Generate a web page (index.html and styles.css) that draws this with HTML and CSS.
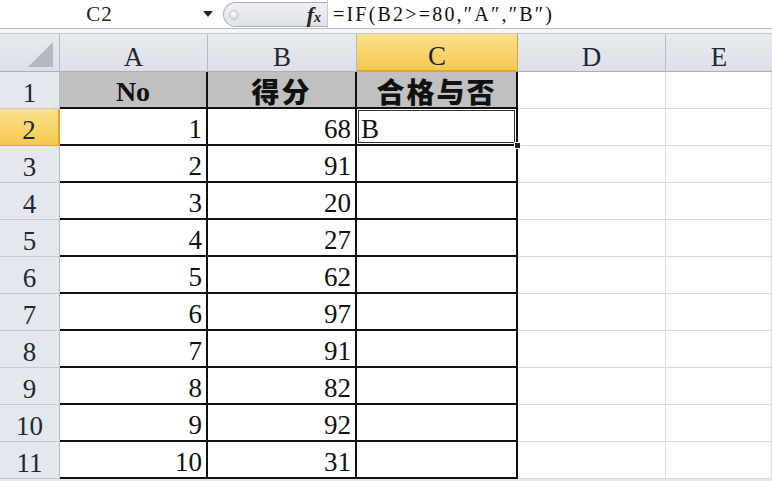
FILE: index.html
```html
<!DOCTYPE html>
<html lang="zh">
<head>
<meta charset="utf-8">
<title>Excel</title>
<link rel="stylesheet" href="styles.css">
</head>
<body>
<div class="fbar">
  <div class="namebox">
    <span class="name">C2</span>
    <span class="arrow"></span>
  </div>
  <div class="fxbox">
    <span class="knob"></span>
    <span class="fx"><i>f</i><span class="x">x</span></span>
  </div>
  <div class="formula">=IF(B2&gt;=80,″A″,″B″)</div>
</div>
<div class="strip"></div>
<div class="sheet">
  <div class="corner"><span class="tri"></span></div>
  <div class="ch">A</div>
  <div class="ch">B</div>
  <div class="ch sel">C</div>
  <div class="ch">D</div>
  <div class="ch last">E</div>

  <div class="rh">1</div>
  <div class="c t hd">No</div>
  <div class="c t hd cjk">得分</div>
  <div class="c t hd cjk">合格与否</div>
  <div class="c"></div>
  <div class="c"></div>

  <div class="rh sel">2</div>
  <div class="c t num">1</div>
  <div class="c t num">68</div>
  <div class="c t txt active">B<span class="handle"></span></div>
  <div class="c"></div>
  <div class="c"></div>

  <div class="rh">3</div>
  <div class="c t num">2</div>
  <div class="c t num">91</div>
  <div class="c t"></div>
  <div class="c"></div>
  <div class="c"></div>

  <div class="rh">4</div>
  <div class="c t num">3</div>
  <div class="c t num">20</div>
  <div class="c t"></div>
  <div class="c"></div>
  <div class="c"></div>

  <div class="rh">5</div>
  <div class="c t num">4</div>
  <div class="c t num">27</div>
  <div class="c t"></div>
  <div class="c"></div>
  <div class="c"></div>

  <div class="rh">6</div>
  <div class="c t num">5</div>
  <div class="c t num">62</div>
  <div class="c t"></div>
  <div class="c"></div>
  <div class="c"></div>

  <div class="rh">7</div>
  <div class="c t num">6</div>
  <div class="c t num">97</div>
  <div class="c t"></div>
  <div class="c"></div>
  <div class="c"></div>

  <div class="rh">8</div>
  <div class="c t num">7</div>
  <div class="c t num">91</div>
  <div class="c t"></div>
  <div class="c"></div>
  <div class="c"></div>

  <div class="rh">9</div>
  <div class="c t num">8</div>
  <div class="c t num">82</div>
  <div class="c t"></div>
  <div class="c"></div>
  <div class="c"></div>

  <div class="rh">10</div>
  <div class="c t num">9</div>
  <div class="c t num">92</div>
  <div class="c t"></div>
  <div class="c"></div>
  <div class="c"></div>

  <div class="rh">11</div>
  <div class="c t num">10</div>
  <div class="c t num">31</div>
  <div class="c t"></div>
  <div class="c"></div>
  <div class="c"></div>
</div>
</body>
</html>
```
FILE: styles.css
```css
* { box-sizing: border-box; }
html, body { margin: 0; padding: 0; background: #fff; }
body {
  width: 772px;
  height: 481px;
  overflow: hidden;
  font-family: "Liberation Serif", "Noto Sans CJK SC", serif;
  color: #1b1b1b;
  background: #e4e8ee;
}

/* formula bar */
.fbar {
  display: flex;
  height: 29px;
  border-bottom: 1px solid #b9bec6;
  background: #fff;
}
.namebox {
  width: 218px;
  display: flex;
  align-items: center;
}
.name {
  flex: 1;
  text-align: center;
  font-family: "Liberation Serif", serif;
  font-size: 21px;
  letter-spacing: 1px;
  color: #222;
  padding-right: 4px;
}
.arrow {
  width: 0;
  height: 0;
  border-left: 5px solid transparent;
  border-right: 5px solid transparent;
  border-top: 6px solid #222;
  margin-right: 5px;
}
.fxbox {
  margin-left: 5px;
  margin-top: 2px;
  width: 104px;
  height: 25px;
  border: 1px solid #a9adb3;
  border-right: none;
  border-radius: 13px 0 0 13px;
  background: linear-gradient(#eef0f3, #dfe2e6);
  display: flex;
  align-items: center;
  justify-content: space-between;
  padding: 0 6px 0 5px;
}
.knob {
  width: 10px;
  height: 10px;
  border-radius: 50%;
  background: radial-gradient(circle at 40% 35%, #fff, #c6c9ce);
  border: 1px solid #c4c7cc;
}
.fx {
  font-family: "Liberation Serif", serif;
  font-size: 22px;
  font-weight: bold;
  color: #222;
  line-height: 1;
}
.fx i { font-style: italic; }
.fx .x { font-size: 14px; font-style: italic; }
.formula {
  flex: 1;
  border-left: 1px solid #c6cad0;
  padding-left: 5px;
  display: flex;
  align-items: center;
  font-family: "Liberation Serif", serif;
  font-size: 20px;
  letter-spacing: 2.2px;
  color: #111;
  white-space: pre;
}
.strip {
  height: 5px;
  background: #f3f5f8;
  border-bottom: 1px solid #c4c9d0;
}

/* sheet */
.sheet {
  display: grid;
  grid-template-columns: 60px 148px 149px 161px 148px 1fr;
  grid-template-rows: 38px repeat(11, 37px);
  background: #fff;
}
.corner {
  background: linear-gradient(#e6e9ee, #dde1e7);
  border-right: 1px solid #b5bbc4;
  border-bottom: 1px solid #aab0b9;
  position: relative;
}
.tri {
  position: absolute;
  right: 6px;
  bottom: 4px;
  width: 0;
  height: 0;
  border-left: 25px solid transparent;
  border-bottom: 25px solid #b5b9bf;
}
.ch {
  background: linear-gradient(#e7eaef, #dde1e7);
  border-right: 1px solid #b5bbc4;
  border-bottom: 1px solid #aab0b9;
  display: flex;
  align-items: flex-end;
  justify-content: center;
  padding-bottom: 0;
  line-height: 1;
  font-size: 27px;
  color: #222833;
}
.ch.last { border-right: none; }
.ch.sel {
  background: linear-gradient(#fbe08e, #f4c94f);
  border-bottom: 2px solid #e6a52a;
  border-right-color: #d9a33b;
}
.rh {
  background: #e4e8ee;
  border-right: 1px solid #b5bbc4;
  border-bottom: 1px solid #c5cad2;
  display: flex;
  align-items: flex-end;
  justify-content: center;
  padding-bottom: 1px;
  line-height: 1;
  font-size: 27px;
  color: #222833;
}
.rh.sel {
  background: linear-gradient(#fbe08e, #f4c94f);
  border-right: 2px solid #e6a52a;
  border-bottom-color: #e6a52a;
}
.c {
  border-right: 1px solid #d9d9d9;
  border-bottom: 1px solid #d9d9d9;
  display: flex;
  align-items: flex-end;
  padding: 0 4px 1px 4px;
  line-height: 1;
  font-size: 27px;
  color: #111;
}
.c.t {
  border-right: 2px solid #111;
  border-bottom: 2px solid #111;
}
.hd {
  background: #c0c0c0;
  justify-content: center;
  font-weight: bold;
  font-size: 28px;
  line-height: 1;
  padding-bottom: 1px;
}
.cjk {
  font-family: "Noto Sans CJK SC", sans-serif;
  font-weight: 900;
  font-size: 28px;
  letter-spacing: 2px;
  line-height: 1.1;
  padding-bottom: 0;
}
.num { justify-content: flex-end; }
.txt { justify-content: flex-start; }
.active {
  position: relative;
  box-shadow: inset 0 0 0 1px #fff, inset 0 0 0 2px #333;
}
.handle {
  position: absolute;
  right: -5px;
  bottom: -5px;
  width: 7px;
  height: 7px;
  background: #222;
  border: 1px solid #fff;
}
```
